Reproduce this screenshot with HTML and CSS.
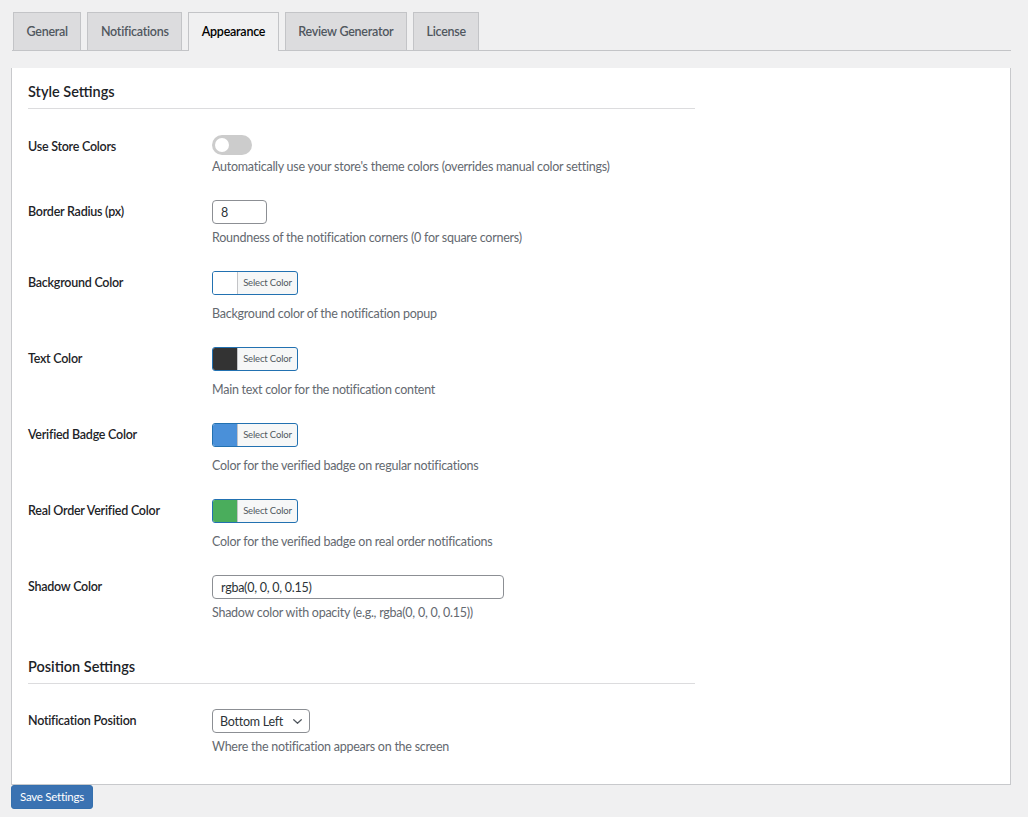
FILE: index.html
```html
<!DOCTYPE html>
<html lang="en">
<head>
<meta charset="utf-8">
<title>Appearance Settings</title>
<link rel="stylesheet" href="styles.css">
</head>
<body>
<div class="wrap">
  <nav class="tabs">
    <a class="tab" href="#">General</a>
    <a class="tab" href="#">Notifications</a>
    <a class="tab active" href="#">Appearance</a>
    <a class="tab" href="#">Review Generator</a>
    <a class="tab" href="#">License</a>
  </nav>
  <form class="settings-form">
    <div class="panel">
      <h2 class="section-title">Style Settings</h2>
      <div class="form-table">
        <div class="row">
          <div class="th">Use Store Colors</div>
          <div class="td td-toggle">
            <label class="switch"><input type="checkbox"><span class="slider"></span></label>
            <p class="desc desc-toggle">Automatically use your store's theme colors (overrides manual color settings)</p>
          </div>
        </div>
        <div class="row">
          <div class="th">Border Radius (px)</div>
          <div class="td">
            <input class="text-input small" type="text" value="8">
            <p class="desc">Roundness of the notification corners (0 for square corners)</p>
          </div>
        </div>
        <div class="row">
          <div class="th">Background Color</div>
          <div class="td">
            <button type="button" class="color-btn"><span class="swatch" style="background:#ffffff"></span><span class="color-label">Select Color</span></button>
            <p class="desc">Background color of the notification popup</p>
          </div>
        </div>
        <div class="row">
          <div class="th">Text Color</div>
          <div class="td">
            <button type="button" class="color-btn"><span class="swatch" style="background:#333333"></span><span class="color-label">Select Color</span></button>
            <p class="desc">Main text color for the notification content</p>
          </div>
        </div>
        <div class="row">
          <div class="th">Verified Badge Color</div>
          <div class="td">
            <button type="button" class="color-btn"><span class="swatch" style="background:#4a90d9"></span><span class="color-label">Select Color</span></button>
            <p class="desc">Color for the verified badge on regular notifications</p>
          </div>
        </div>
        <div class="row">
          <div class="th">Real Order Verified Color</div>
          <div class="td">
            <button type="button" class="color-btn"><span class="swatch" style="background:#4aad5c"></span><span class="color-label">Select Color</span></button>
            <p class="desc">Color for the verified badge on real order notifications</p>
          </div>
        </div>
        <div class="row">
          <div class="th">Shadow Color</div>
          <div class="td">
            <input class="text-input wide" type="text" value="rgba(0, 0, 0, 0.15)">
            <p class="desc">Shadow color with opacity (e.g., rgba(0, 0, 0, 0.15))</p>
          </div>
        </div>
      </div>
      <h2 class="section-title second">Position Settings</h2>
      <div class="form-table second-table">
        <div class="row">
          <div class="th">Notification Position</div>
          <div class="td">
            <span class="select-wrap">
              <select class="select">
                <option>Bottom Left</option>
                <option>Bottom Right</option>
                <option>Top Left</option>
                <option>Top Right</option>
              </select>
              <svg class="chevron" width="9" height="5" viewBox="0 0 9 5" aria-hidden="true"><path d="M0.7 0.7 L4.5 4.3 L8.3 0.7" fill="none" stroke="#50575e" stroke-width="1.2" stroke-linecap="round" stroke-linejoin="round"/></svg>
            </span>
            <p class="desc">Where the notification appears on the screen</p>
          </div>
        </div>
      </div>
    </div>
    <button type="submit" class="save-btn">Save Settings</button>
  </form>
</div>
</body>
</html>
```

FILE: styles.css
```css
* { box-sizing: border-box; }

html, body {
  margin: 0;
  padding: 0;
  background: #f0f0f1;
}

body {
  font-family: "Lato", "Liberation Sans", sans-serif;
  font-size: 12.5px;
  letter-spacing: -0.25px;
  color: #3c434a;
}

.wrap {
  margin-left: 11px;
  width: 1000px;
}

/* Tabs */
.tabs {
  display: flex;
  align-items: flex-end;
  gap: 6px;
  margin-left: 1px;
  padding: 12px 0 0 1px;
  border-bottom: 1px solid #c3c4c7;
  height: 51px;
}

.tab {
  display: block;
  height: 38px;
  line-height: 38px;
  padding: 0 12.5px;
  background: #dcdcde;
  border: 1px solid #c3c4c7;
  border-bottom: none;
  color: #50575e;
  font-size: 12.5px;
  font-weight: 600;
  text-decoration: none;
}

.tab.active {
  background: #f0f0f1;
  color: #000;
  height: 39px;
  margin-bottom: -1px;
  padding-bottom: 1px;
}

/* Panel */
.settings-form { margin: 17px 0 0; }

.panel {
  background: #fff;
  border: 1px solid #c8c9cc;
  border-top: none;
  padding: 14px 16px 16px;
}

.section-title {
  width: 667px;
  margin: 0;
  padding: 0 0 6px;
  font-size: 14.5px;
  letter-spacing: 0;
  line-height: 20px;
  font-weight: 600;
  color: #1d2327;
  border-bottom: 1px solid #dcdcde;
}

.section-title.second { margin-top: 23px; }

.form-table { margin-top: 14px; }
.form-table.second-table { margin-top: 13px; }

.row {
  display: flex;
}

.th {
  width: 184px;
  flex: none;
  padding-top: 14px;
  line-height: 19px;
  font-weight: 600;
  color: #1d2327;
}

.td {
  padding: 12px 0;
}

.desc {
  margin: 4px 0 0;
  line-height: 19px;
  color: #646970;
}

.desc-toggle { margin-top: 2px; }

/* Toggle */
.switch {
  position: relative;
  display: block;
  width: 40px;
  height: 20px;
}

.switch input {
  opacity: 0;
  width: 0;
  height: 0;
  margin: 0;
}

.slider {
  position: absolute;
  inset: 0;
  background: #cccccc;
  border-radius: 20px;
}

.slider::before {
  content: "";
  position: absolute;
  left: 3px;
  top: 3px;
  width: 14px;
  height: 14px;
  border-radius: 50%;
  background: #fff;
}

/* Inputs */
.text-input {
  display: block;
  height: 24px;
  border: 1px solid #8c8f94;
  border-radius: 4px;
  padding: 0 8px;
  font-family: inherit;
  font-size: 12.5px;
  letter-spacing: -0.25px;
  color: #2c3338;
  background: #fff;
  margin: 0;
}

.text-input.small { width: 55px; }
.text-input.wide { width: 292px; }

/* Color picker button */
.color-btn {
  display: flex;
  align-items: stretch;
  width: 86px;
  height: 24px;
  padding: 0;
  margin: 0 0 9px;
  border: 1px solid #2271b1;
  border-radius: 3px;
  background: #f6f7f7;
  overflow: hidden;
  font-family: inherit;
  cursor: pointer;
}

.swatch {
  width: 25px;
  flex: none;
  border-right: 1px solid #c3c4c7;
}

.color-label {
  flex: 1;
  font-size: 9.5px;
  letter-spacing: -0.15px;
  line-height: 22px;
  color: #50575e;
  text-align: center;
}

/* Select */
.select-wrap {
  position: relative;
  display: block;
  width: 98px;
  height: 24px;
}

.select {
  appearance: none;
  -webkit-appearance: none;
  width: 98px;
  height: 24px;
  border: 1px solid #8c8f94;
  border-radius: 4px;
  background: #fff;
  padding: 0 20px 0 7px;
  font-family: inherit;
  font-size: 12.5px;
  letter-spacing: -0.25px;
  color: #2c3338;
  margin: 0;
}

.chevron {
  position: absolute;
  right: 8px;
  top: 10px;
  pointer-events: none;
}

/* Save */
.save-btn {
  display: block;
  width: 82px;
  height: 24px;
  margin: 0;
  padding: 0;
  border: 1px solid #3570ae;
  border-radius: 3px;
  background: #3a72b2;
  color: #fff;
  font-family: inherit;
  font-size: 11.5px;
  letter-spacing: -0.25px;
  line-height: 22px;
  cursor: pointer;
}
```
